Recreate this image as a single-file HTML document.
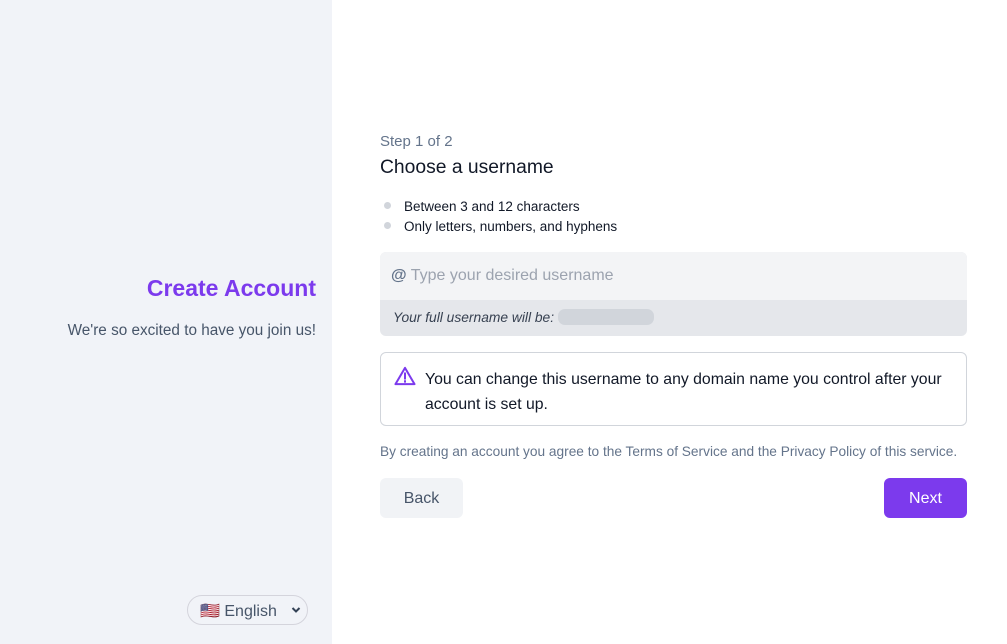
<!DOCTYPE html>
<html><head><style>
*{box-sizing:border-box;margin:0;padding:0}
body{width:1007px;height:644px;font-family:"Liberation Sans","DejaVu Sans",sans-serif;background:#fff;position:relative;overflow:hidden;color:#111827}
.left{position:absolute;left:0;top:0;width:332px;height:644px;background:#f1f3f8}
.abs{position:absolute;white-space:nowrap}
</style></head><body>
<div class="left">
<div class="abs" style="right:16px;top:275px;font-size:23px;font-weight:bold;color:#7c3aed">Create Account</div>
<div class="abs" style="right:16px;top:322px;font-size:15.3px;color:#475569">We're so excited to have you join us!</div>
<div class="abs" style="left:187px;top:595px;width:121px;height:30px;border:1px solid #d4d4dc;border-radius:15px;font-size:16px;color:#475569;padding:5px 0 0 12px">🇺🇸 English<svg style="position:absolute;right:6px;top:10px" width="10" height="8" viewBox="0 0 10 8"><path d="M1.5 2l3.5 3.5 3.5-3.5" fill="none" stroke="#334155" stroke-width="2"/></svg></div>
</div>
<div class="abs" style="left:380px;top:133px;font-size:15px;color:#64748b">Step 1 of 2</div>
<div class="abs" style="left:380px;top:157px;font-size:19.3px;color:#111827">Choose a username</div>
<div class="abs" style="left:384px;top:202px;width:7px;height:7px;border-radius:50%;background:#d1d5db"></div>
<div class="abs" style="left:404px;top:199px;font-size:13.5px">Between 3 and 12 characters</div>
<div class="abs" style="left:384px;top:222px;width:7px;height:7px;border-radius:50%;background:#d1d5db"></div>
<div class="abs" style="left:404px;top:219px;font-size:13.5px">Only letters, numbers, and hyphens</div>
<div class="abs" style="left:380px;top:252px;width:587px;height:84px;border-radius:6px;background:#e5e7eb;overflow:hidden">
<div style="height:48px;background:#f3f4f6;padding:15px 0 0 11px;font-size:16px;color:#9ca3af"><span style="color:#64748b;font-weight:bold">@</span> Type your desired username</div>
<div style="padding:9px 0 0 13px;font-size:13.8px;font-style:italic;color:#374151">Your full username will be: <span style="display:inline-block;width:96px;height:16px;border-radius:7px;background:#d1d5db;vertical-align:-3px"></span></div>
</div>
<div class="abs" style="left:380px;top:352px;width:587px;height:74px;border:1px solid #d1d5db;border-radius:6px"></div>
<svg class="abs" style="left:394px;top:366px" width="22" height="20" viewBox="0 0 24 22"><path d="M12 2L1.5 20h21z M12 8v6 M12 16.5v1" fill="none" stroke="#7c3aed" stroke-width="2.2" stroke-linejoin="round" stroke-linecap="round"/></svg>
<div class="abs" style="left:425px;top:367px;font-size:15.8px;line-height:25px;white-space:normal;width:535px">You can change this username to any domain name you control after your account is set up.</div>
<div class="abs" style="left:380px;top:444px;font-size:13.7px;color:#64748b">By creating an account you agree to the Terms of Service and the Privacy Policy of this service.</div>
<div class="abs" style="left:380px;top:478px;width:83px;height:40px;border-radius:6px;background:#f1f3f6;font-size:16px;color:#475569;text-align:center;line-height:42px">Back</div>
<div class="abs" style="left:884px;top:478px;width:83px;height:40px;border-radius:6px;background:#7c3aed;font-size:16px;color:#fff;text-align:center;line-height:42px">Next</div>
</body></html>
